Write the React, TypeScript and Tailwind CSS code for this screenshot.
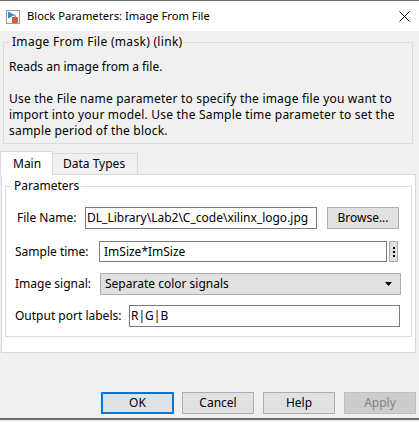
import React from "react";

const font = { fontFamily: '"Noto Sans", "Segoe UI", sans-serif' };

const BlockIcon: React.FC = () => (
  <svg width="14" height="14" viewBox="0 0 14 14">
    <rect x="0.5" y="0.5" width="13" height="13" fill="#fafafa" stroke="#9a9a9a" />
    <path d="M2.5 2 L2.5 8 L7.5 5 Z" fill="#2b8fd6" stroke="#1565a8" strokeWidth="0.6" />
    <path d="M7.5 5 L9 5 L9 7.5" fill="none" stroke="#1565a8" strokeWidth="0.8" />
    <rect x="6.5" y="7.5" width="5" height="5" fill="#e4572e" stroke="#a8321a" strokeWidth="0.6" />
  </svg>
);

const Button: React.FC<{ label: string; className?: string; primary?: boolean; disabled?: boolean }> = ({
  label,
  className,
  primary,
  disabled,
}) => (
  <button
    className={
      "h-[22px] flex items-center justify-center text-[12px] " +
      (primary
        ? "border-2 border-[#0078d7] bg-[#e1e1e1] text-black "
        : disabled
        ? "border border-[#bfbfbf] bg-[#cccccc] text-[#838383] "
        : "border border-[#adadad] bg-[#e1e1e1] text-black ") +
      (className || "")
    }
  >
    {label}
  </button>
);

const App: React.FC = () => {
  return (
    <div className="w-[419px] h-[422px] bg-[#f0f0f0] text-[12px] text-black overflow-hidden flex flex-col" style={font}>
      {/* Title bar */}
      <div className="h-[31px] bg-white border-t border-[#6b6b6b] flex items-center shrink-0">
        <div className="ml-[6px] mt-[1px]">
          <BlockIcon />
        </div>
        <span className="ml-[7px] text-[11.2px]">Block Parameters: Image From File</span>
        <svg className="ml-auto mr-[9px]" width="11" height="11" viewBox="0 0 11 11">
          <path d="M0.5 0.5 L10.5 10.5 M10.5 0.5 L0.5 10.5" stroke="#111" strokeWidth="1" />
        </svg>
      </div>

      {/* Mask description group */}
      <fieldset className="mt-[3px] ml-[3px] mr-[6px] border border-[#dcdcdc] pl-[5px] pr-[2px] pb-[4px] leading-[16px]">
        <legend className="ml-[1px] px-[2px] leading-[16px] tracking-[0.3px]">Image From File (mask) (link)</legend>
        <p className="mt-[9px]">Reads an image from a file.</p>
        <div className="mt-[16px] whitespace-nowrap tracking-[0.2px]">
          <p>Use the File name parameter to specify the image file you want to</p>
          <p>import into your model. Use the Sample time parameter to set the</p>
          <p>sample period of the block.</p>
        </div>
      </fieldset>

      {/* Tabs */}
      <div className="mt-[7px] flex items-end h-[23px] relative z-10">
        <div className="h-[24px] w-[53px] bg-white border-t border-l border-r border-[#d9d9d9] flex items-center pl-[12px] -mb-px">
          Main
        </div>
        <div className="h-[21px] w-[85px] bg-[#f0f0f0] border-t border-r border-[#d9d9d9] flex items-center pl-[10px]">
          Data Types
        </div>
      </div>

      {/* Tab panel */}
      <div className="ml-px w-[415px] h-[179px] bg-white border border-[#d9d9d9] shrink-0">
        <fieldset className="mt-[3px] ml-[3px] mr-[3px] border border-[#dcdcdc] h-[159px]">
          <legend className="ml-[6px] px-[2px] leading-[16px]">Parameters</legend>

          <div className="mt-[13px] flex items-center h-[22px]">
            <span className="ml-[11px] w-[68px]">File Name:</span>
            <div className="w-[232px] h-[22px] border border-[#7a7a7a] bg-white flex items-center pl-[1px] overflow-hidden whitespace-nowrap">
              DL_Library\Lab2\C_code\xilinx_logo.jpg
            </div>
            <Button label="Browse..." className="ml-[10px] w-[72px]" />
          </div>

          <div className="mt-[12px] flex items-center h-[21px]">
            <span className="ml-[9px] w-[84px]">Sample time:</span>
            <div className="w-[288px] h-[21px] border border-[#7a7a7a] bg-white flex items-center pl-[4px]">
              ImSize*ImSize
            </div>
            <div className="ml-[2px] w-[9px] h-[21px] border border-[#adadad] bg-[#e1e1e1] flex flex-col items-center justify-center gap-[2px]">
              <span className="w-[2px] h-[2px] bg-black" />
              <span className="w-[2px] h-[2px] bg-black" />
              <span className="w-[2px] h-[2px] bg-black" />
            </div>
          </div>

          <div className="mt-[11px] flex items-center h-[22px]">
            <span className="ml-[9px] w-[85px]">Image signal:</span>
            <div className="w-[301px] h-[22px] border border-[#adadad] bg-[#e1e1e1] flex items-center pl-[4px] pr-[8px]">
              <span>Separate color signals</span>
              <svg className="ml-auto" width="7" height="4" viewBox="0 0 7 4">
                <path d="M0 0 L7 0 L3.5 4 Z" fill="#000" />
              </svg>
            </div>
          </div>

          <div className="mt-[10px] flex items-center h-[22px]">
            <span className="ml-[9px] w-[114px]">Output port labels:</span>
            <div className="w-[271px] h-[22px] border border-[#7a7a7a] bg-white flex items-center pl-[1px]">
              R|G|B
            </div>
          </div>
        </fieldset>
      </div>

      {/* Buttons */}
      <div className="mt-[39px] flex h-[22px]">
        <Button label="OK" primary className="ml-[101px] w-[73px]" />
        <Button label="Cancel" className="ml-[8px] w-[72px]" />
        <Button label="Help" className="ml-[9px] w-[72px]" />
        <Button label="Apply" disabled className="ml-[9px] w-[72px]" />
      </div>

      <div className="mt-[4px] h-[2px] bg-[#6b6b6b]" />
    </div>
  );
};

export default App;
